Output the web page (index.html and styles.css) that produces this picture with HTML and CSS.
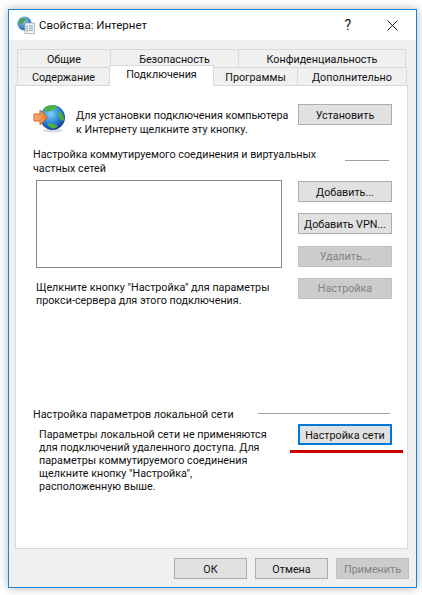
FILE: index.html
```html
<!DOCTYPE html>
<html lang="ru">
<head>
<meta charset="utf-8">
<title>Свойства: Интернет</title>
<link rel="stylesheet" href="styles.css">
</head>
<body>
<div class="window">
  <header class="titlebar">
    <svg class="title-icon" width="18" height="18" viewBox="0 0 18 18">
      <defs>
        <radialGradient id="tg" cx="40%" cy="30%" r="75%"><stop offset="0" stop-color="#8fd0f5"/><stop offset="1" stop-color="#1c5fb0"/></radialGradient>
      </defs>
      <circle cx="7.5" cy="7.5" r="7" fill="url(#tg)"/>
      <path d="M3 3.5 C5 2 8 1.5 9 3 C9 5 6.5 5 6 7 C5 9 3 8 2 6 Z M10 8 C12 7 14 8 14 10 C13 12 11 13 10 12 Z" fill="#4fa04a"/>
      <rect x="8" y="7" width="9.5" height="10.5" fill="#f4f7fa" stroke="#9aa7b4" stroke-width=".8"/>
      <path d="M12 10h4M12 12.2h4M12 14.4h4" stroke="#8296aa" stroke-width="1"/>
      <path d="M9.5 9.8h1.2v1.2h-1.2zM9.5 12h1.2v1.2h-1.2zM9.5 14.2h1.2v1.2h-1.2z" fill="#3d8f5a"/>
    </svg>
    <span class="title-text">Свойства: Интернет</span>
    <span class="title-help">?</span>
    <svg class="title-close" width="11" height="11" viewBox="0 0 11 11"><path d="M.5.5l10 10M10.5.5l-10 10" stroke="#222" stroke-width="1" fill="none"/></svg>
  </header>
  <main class="body">
    <nav class="tabs">
      <div class="tab-row tab-row-top">
        <div class="tab w93">Общие</div>
        <div class="tab w128">Безопасность</div>
        <div class="tab w168">Конфиденциальность</div>
      </div>
      <div class="tab-row tab-row-bottom">
        <div class="tab w92">Содержание</div>
        <div class="tab tab-active">Подключения</div>
        <div class="tab w84">Программы</div>
        <div class="tab w109">Дополнительно</div>
      </div>
    </nav>
    <section class="panel">
      <div class="connect">
        <svg class="globe" width="33" height="28" viewBox="0 0 33 28">
          <defs>
            <radialGradient id="gg" cx="42%" cy="35%" r="70%"><stop offset="0" stop-color="#7fd4f7"/><stop offset=".55" stop-color="#2a85d6"/><stop offset="1" stop-color="#0c2f8a"/></radialGradient>
            <linearGradient id="ga" x1="0" x2="1" y1="0" y2="0"><stop offset="0" stop-color="#f6b27c"/><stop offset="1" stop-color="#ec7a2c"/></linearGradient>
          </defs>
          <ellipse cx="20" cy="25.500" rx="10" ry="2" fill="#c9ced4" opacity=".7"/>
          <circle cx="19.500" cy="12.500" r="12.500" fill="url(#gg)"/>
          <path d="M11 3 C15 -.5 22 -.5 25 2 C24 5 19 4 17 6 C14 8 11 6 11 3 Z M26 6 C29 7 31 11 31 15 C29 17 27 15 26 12 C25 10 25 8 26 6 Z M14 19 C17 17 22 19 25 21 C22 24.500 17 24.500 14 19 Z" fill="#4fae43"/>
          <path d="M1 9h6V5l7.500 7.500L7 20v-4H1z" fill="url(#ga)" stroke="#d9641e" stroke-width="1"/>
        </svg>
        <p class="connect-text">Для установки подключения компьютера<br>к Интернету щелкните эту кнопку.</p>
        <button class="btn" type="button">Установить</button>
      </div>

      <div class="group-head dial-head">
        <h2 class="group-label">Настройка коммутируемого соединения и виртуальных<br>частных сетей</h2>
        <span class="rule rule-short"></span>
      </div>
      <div class="dial">
        <div class="dial-left">
          <div class="listbox"></div>
          <p class="note">Щелкните кнопку "Настройка" для параметры<br>прокси-сервера для этого подключения.</p>
        </div>
        <div class="dial-buttons">
          <button class="btn" type="button">Добавить...</button>
          <button class="btn" type="button">Добавить VPN...</button>
          <button class="btn btn-disabled" type="button">Удалить...</button>
          <button class="btn btn-disabled" type="button">Настройка</button>
        </div>
      </div>

      <div class="group-head lan-head">
        <h2 class="group-label">Настройка параметров локальной сети</h2>
        <span class="rule rule-long"></span>
      </div>
      <div class="lan">
        <p class="note lan-text">Параметры локальной сети не применяются<br>для подключений удаленного доступа. Для<br>параметры коммутируемого соединения<br>щелкните кнопку "Настройка",<br>расположенную выше.</p>
        <div class="lan-action">
          <button class="btn btn-default" type="button">Настройка сети</button>
          <span class="annotation"></span>
        </div>
      </div>
    </section>
    <footer class="footer">
      <button class="btn btn-foot" type="button">ОК</button>
      <button class="btn btn-foot" type="button">Отмена</button>
      <button class="btn btn-foot btn-disabled" type="button">Применить</button>
    </footer>
  </main>
</div>
</body>
</html>
```

FILE: styles.css
```css
* { box-sizing: border-box; }

html, body { margin: 0; padding: 0; }

body {
  width: 422px;
  height: 595px;
  overflow: hidden;
  background: #fff;
  font-family: Roboto, "Noto Sans", "Liberation Sans", sans-serif;
  font-size: 10.75px;
  color: #111;
  padding: 9px 0 0 8px;
}

.window {
  width: 409px;
  height: 579px;
  border: 1px solid #1883d7;
  background: #f0f0f0;
  box-shadow: 0 0 9px rgba(0, 0, 0, .3);
  display: flex;
  flex-direction: column;
}

.titlebar {
  height: 30px;
  background: #fff;
  display: flex;
  align-items: center;
  padding-left: 8px;
  flex: none;
}

.title-icon { flex: none; margin-right: 4px; }

.title-text { font-size: 11.5px; flex: 1; }

.title-help { font-size: 14px; margin-right: 36px; }

.title-close { margin-right: 18px; }

.body {
  flex: 1;
  display: flex;
  flex-direction: column;
  padding: 9px 0 0 6px;
}

.tabs { padding-left: 2px; position: relative; z-index: 1; }

.tab-row { display: flex; }

.tab-row-top { height: 18px; }

.tab-row-bottom { height: 18px; }

.tab {
  border: 1px solid #d9d9d9;
  border-bottom: 0;
  margin-right: -1px;
  padding-top: 2px;
  display: flex;
  align-items: center;
  justify-content: center;
  background: #f0f0f0;
  line-height: 14px;
}

.w93 { width: 94px; }
.w128 { width: 129px; }
.w168 { width: 168px; }
.w92 { width: 93px; }
.w84 { width: 85px; }
.w109 { width: 110px; }

.tab-active {
  width: 105px;
  height: 21px;
  margin-top: -2px;
  background: #fff;
  border-color: #d9d9d9;
  position: relative;
  z-index: 2;
  padding-top: 0;
  padding-bottom: 3px;
}

.panel {
  width: 393px;
  height: 464px;
  border: 1px solid #d9d9d9;
  background: #fff;
  flex: none;
  padding: 18px 15px 0 17px;
  display: flex;
  flex-direction: column;
}

.btn {
  width: 94px;
  height: 21px;
  padding: 1px 0 0;
  background: #e1e1e1;
  border: 1px solid #adadad;
  font: inherit;
  color: #111;
  flex: none;
}

.btn-disabled {
  background: #ccc;
  border-color: #bfbfbf;
  color: #838383;
}

.btn-default {
  border: 2px solid #0078d7;
}

.connect {
  display: flex;
  align-items: flex-start;
  height: 32px;
}

.globe { flex: none; margin-right: 10px; margin-top: 1px; }

.connect-text {
  margin: 5px 0 0;
  line-height: 14px;
  flex: 1;
  white-space: nowrap;
}

.group-head { display: flex; }

.group-label {
  margin: 0;
  font: inherit;
  line-height: 14px;
  white-space: nowrap;
}

.rule { display: block; height: 1px; background: #a0a0a0; }

.dial-head { margin-top: 12px; }

.rule-short { width: 44px; margin: 12px 3px 0 auto; }

.dial {
  display: grid;
  grid-template-columns: 246px 94px;
  column-gap: 16px;
  margin: 4px 0 0 3px;
}

.listbox {
  height: 88px;
  border: 1px solid #828790;
  background: #fff;
}

.note { margin: 0; line-height: 13px; white-space: nowrap; }

.dial-left .note { margin-top: 13px; }

.dial-buttons {
  display: flex;
  flex-direction: column;
  gap: 11.33px;
  padding-top: 1px;
}

.lan-head { margin-top: 100px; height: 14px; }

.lan-head .group-label { padding-top: 1px; }

.rule-long { width: 132px; margin: 6px 2px 0 auto; }

.lan {
  display: flex;
  justify-content: space-between;
  padding: 0 0 0 6px;
}

.lan-text { margin-top: 7px; }

.lan-action { position: relative; margin-top: 3px; }

.annotation {
  position: absolute;
  left: -8px;
  top: 26px;
  width: 113px;
  height: 3px;
  background: #cc0000;
}

.footer {
  display: flex;
  justify-content: flex-end;
  gap: 8px;
  padding: 9px 7px 0 0;
}

.btn-foot { width: 73px; }
```
